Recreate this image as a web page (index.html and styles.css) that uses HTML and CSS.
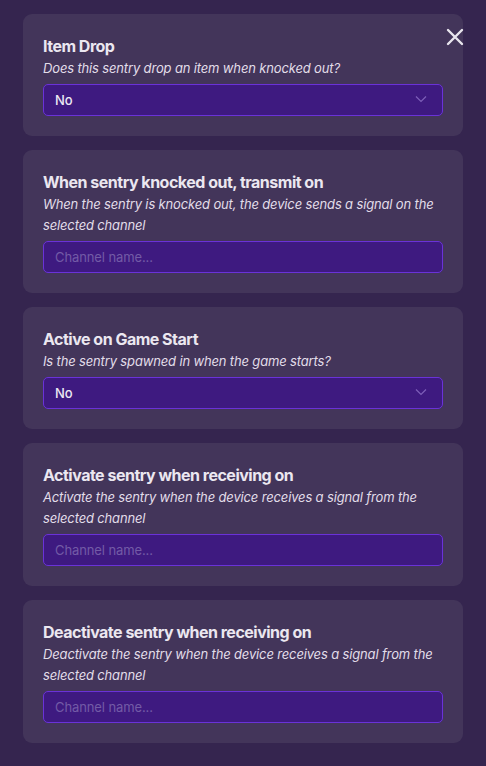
FILE: index.html
```html
<!DOCTYPE html>
<html>
<head>
<meta charset="utf-8">
<link rel="stylesheet" href="styles.css">
</head>
<body>
<div class="panel">
  <button class="close" aria-label="Close">
    <svg width="18" height="18" viewBox="0 0 18 18"><path d="M2 2 L16 16 M16 2 L2 16" stroke="#e9e6ee" stroke-width="2.4" stroke-linecap="round"/></svg>
  </button>
  <div class="card">
    <div class="title">Item Drop</div>
    <div class="desc">Does this sentry drop an item when knocked out?</div>
    <div class="field select"><span>No</span>
      <svg class="chev" width="12" height="8" viewBox="0 0 12 8"><path d="M1 1.5 L6 6.5 L11 1.5" fill="none" stroke="#7d5fb8" stroke-width="1.2"/></svg>
    </div>
  </div>
  <div class="card">
    <div class="title">When sentry knocked out, transmit on</div>
    <div class="desc">When the sentry is knocked out, the device sends a signal on the selected channel</div>
    <div class="field input"><span>Channel name...</span></div>
  </div>
  <div class="card">
    <div class="title">Active on Game Start</div>
    <div class="desc">Is the sentry spawned in when the game starts?</div>
    <div class="field select"><span>No</span>
      <svg class="chev" width="12" height="8" viewBox="0 0 12 8"><path d="M1 1.5 L6 6.5 L11 1.5" fill="none" stroke="#7d5fb8" stroke-width="1.2"/></svg>
    </div>
  </div>
  <div class="card">
    <div class="title">Activate sentry when receiving on</div>
    <div class="desc">Activate the sentry when the device receives a signal from the selected channel</div>
    <div class="field input"><span>Channel name...</span></div>
  </div>
  <div class="card">
    <div class="title">Deactivate sentry when receiving on</div>
    <div class="desc">Deactivate the sentry when the device receives a signal from the selected channel</div>
    <div class="field input"><span>Channel name...</span></div>
  </div>
</div>
</body>
</html>
```
FILE: styles.css
```css
html, body {
  margin: 0;
  padding: 0;
}
body {
  background: #35254f;
  font-family: Inter, "Noto Sans", sans-serif;
  width: 486px;
  height: 766px;
  overflow: hidden;
}
.panel {
  position: relative;
  display: flex;
  flex-direction: column;
  gap: 14px;
  padding: 14px 23px 0 23px;
}
.close {
  position: absolute;
  top: 28px;
  left: 446px;
  background: none;
  border: 0;
  padding: 0;
  width: 18px;
  height: 18px;
  z-index: 2;
}
.close svg { display: block; }
.card {
  background: #43355a;
  border-radius: 9px;
  padding: 20px 20px 20px 20px;
  display: flex;
  flex-direction: column;
}
.title {
  color: #ebe7f0;
  font-size: 16px;
  font-weight: 700;
  line-height: 24px;
  letter-spacing: -0.5px;
}
.desc {
  color: #e2dde9;
  font-size: 13px;
  font-style: italic;
  line-height: 21px;
  margin-bottom: 5px;
  letter-spacing: -0.15px;
}
.field {
  box-sizing: border-box;
  height: 32px;
  background: #3e1a80;
  border: 1px solid #6a32d8;
  border-radius: 5px;
  display: flex;
  align-items: center;
  justify-content: space-between;
  padding: 0 15px 0 11px;
  font-size: 13px;
  letter-spacing: -0.1px;
}
.select span {
  color: #ece8f3;
  font-weight: 500;
}
.input span {
  color: #735ba6;
}
.chev { display: block; margin-top: -2px; }
```
